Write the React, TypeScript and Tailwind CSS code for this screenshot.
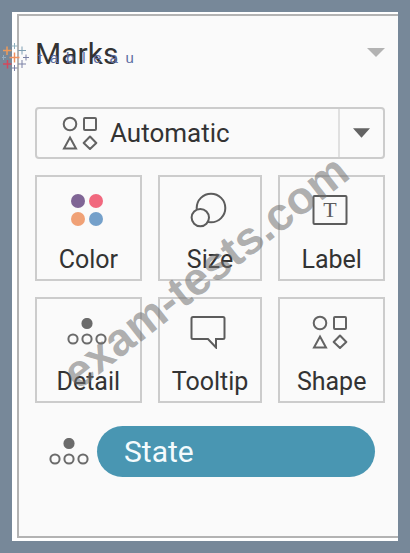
import type { ReactNode } from "react";

type Mark = {
  name: string;
  icon: ReactNode;
};

function ShapeIcon() {
  return (
    <svg
      aria-hidden
      className="h-[34px] w-[36px] shrink-0"
      fill="none"
      stroke="#636363"
      strokeWidth="2"
      viewBox="0 0 36 34"
    >
      <circle cx="8" cy="8" r="6.3" />
      <rect height="12" rx="1" width="12" x="22" y="2" />
      <path d="M8 21.5 L14 32.5 H2 Z" />
      <path d="M28 20.5 L34.3 27 L28 33 L21.7 27 Z" strokeLinejoin="round" />
    </svg>
  );
}

function ColorIcon() {
  return (
    <svg aria-hidden className="h-[34px] w-[34px]" viewBox="0 0 34 34">
      <circle cx="8" cy="8" fill="#7f6595" r="7" />
      <circle cx="26" cy="8" fill="#f1687e" r="7" />
      <circle cx="8" cy="26" fill="#f0a176" r="7" />
      <circle cx="26" cy="26" fill="#74a0ca" r="7" />
    </svg>
  );
}

function SizeIcon() {
  return (
    <svg
      aria-hidden
      className="h-[36px] w-[38px]"
      fill="#fafafa"
      stroke="#5c5c5c"
      strokeWidth="2"
      viewBox="0 0 38 36"
    >
      <circle cx="22" cy="16" r="14.3" />
      <circle cx="11.3" cy="25.6" r="8.7" />
    </svg>
  );
}

function LabelIcon() {
  return (
    <svg aria-hidden className="h-[34px] w-[36px]" viewBox="0 0 36 34">
      <rect
        fill="none"
        height="28"
        rx="1"
        stroke="#5c5c5c"
        strokeWidth="2"
        width="33"
        x="1.5"
        y="3"
      />
      <text
        className="font-['Liberation_Serif',serif] text-[22px]"
        fill="#5c5c5c"
        textAnchor="middle"
        x="18"
        y="24"
      >
        T
      </text>
    </svg>
  );
}

function DetailIcon() {
  return (
    <svg
      aria-hidden
      className="h-[28px] w-[40px] shrink-0"
      fill="none"
      stroke="#6b6b6b"
      strokeWidth="2"
      viewBox="0 0 40 28"
    >
      <circle cx="20" cy="5.5" fill="#6b6b6b" r="4.6" />
      <circle cx="6" cy="21" r="4.6" />
      <circle cx="20" cy="21" r="4.6" />
      <circle cx="34" cy="21" r="4.6" />
    </svg>
  );
}

function TooltipIcon() {
  return (
    <svg
      aria-hidden
      className="h-[34px] w-[36px]"
      fill="none"
      stroke="#5c5c5c"
      strokeWidth="2"
      viewBox="0 0 36 34"
    >
      <path d="M3 2 H33 Q34.5 2 34.5 3.5 V22.5 Q34.5 24 33 24 H26 V32.5 L18 24 H3 Q1.5 24 1.5 22.5 V3.5 Q1.5 2 3 2 Z" />
    </svg>
  );
}

const marks: Mark[] = [
  { name: "Color", icon: <ColorIcon /> },
  { name: "Size", icon: <SizeIcon /> },
  { name: "Label", icon: <LabelIcon /> },
  { name: "Detail", icon: <DetailIcon /> },
  { name: "Tooltip", icon: <TooltipIcon /> },
  { name: "Shape", icon: <ShapeIcon /> },
];

function Logo() {
  return (
    <div className="pointer-events-none absolute left-0.5 top-[42px] flex items-center gap-2">
      <svg
        aria-hidden
        className="h-[30px] w-[28px]"
        fill="none"
        viewBox="0 0 28 30"
      >
        <path d="M12.5 10.5 V20.5 M7.5 15.5 H17.5" stroke="#f0915f" strokeWidth="1.5" />
        <path d="M5 4.5 V13 M1 8.5 H9.5" stroke="#ee9a5b" strokeWidth="1.5" />
        <path d="M5.5 18 V26.5 M1 22 H9.5" stroke="#d4485c" strokeWidth="1.5" />
        <path d="M20 4.5 V12.5 M16 8.5 H24" stroke="#7f9fb3" />
        <path d="M20 18 V26 M16 22 H24" stroke="#7a80a5" />
        <path d="M12.5 1 V7 M9.5 4 H15.5" stroke="#8fb0bd" />
        <path d="M12.5 23 V29 M9.5 26 H15.5" stroke="#7a80a5" />
        <path d="M24 12.5 V18.5 M21 15.5 H27" stroke="#7a80a5" />
        <path d="M1.5 13 V18 M0 15.5 H4" stroke="#95adc0" />
      </svg>
      <div className="flex w-24 items-center justify-between pt-0.5 font-['Liberation_Sans',sans-serif] text-[15px] leading-4 text-[#5c6da3]">
        {[..."tableau"].map((letter, index) => (
          <span key={index}>{letter}</span>
        ))}
      </div>
    </div>
  );
}

export default function App() {
  return (
    <main className="relative flex min-h-screen overflow-hidden bg-[#778899] p-3 font-['Roboto',sans-serif] text-[#333333]">
      <div className="flex flex-1 bg-white pb-[3px] pl-[5px] pt-0.5">
        <section className="flex-1 border-y-2 border-l-2 border-[#b3b3b3] bg-[#fafafa] pl-4 pr-[13px] pt-5">
          <header className="flex items-center justify-between">
            <h1 className="text-[30px] leading-9">Marks</h1>
            <button aria-label="Marks menu" type="button">
              <svg aria-hidden className="mb-1 h-[9px] w-[18px]" viewBox="0 0 18 9">
                <path d="M0 0 H18 L9 9 Z" fill="#b3b3b3" />
              </svg>
            </button>
          </header>

          <div className="mt-[35px] flex h-[52px] items-center rounded-sm border-2 border-[#cccccc] pl-[25px]">
            <ShapeIcon />
            <select
              aria-label="Mark type"
              className="h-full min-w-0 flex-1 appearance-none bg-transparent pl-3 text-[26px]"
            >
              <option>Automatic</option>
            </select>
            <div className="pointer-events-none flex h-full w-[45px] items-center justify-center border-l-2 border-[#e0e0e0]">
              <svg aria-hidden className="h-[10px] w-[17px]" viewBox="0 0 18 10">
                <path d="M0 0 H18 L9 10 Z" fill="#636363" />
              </svg>
            </div>
          </div>

          <div className="mt-4 grid grid-cols-[107fr_105fr_107fr] gap-4">
            {marks.map((mark) => (
              <button
                className="flex h-[106px] flex-col items-center border-2 border-[#cccccc] pt-[15px]"
                key={mark.name}
                type="button"
              >
                <span className="flex h-9 items-center pr-[3px]">{mark.icon}</span>
                <span className="mt-4 text-[25px] leading-8">{mark.name}</span>
              </button>
            ))}
          </div>

          <div className="mt-[23px] flex items-center gap-2 pl-3.5 pr-2.5">
            <DetailIcon />
            <button
              className="h-[51px] flex-1 rounded-full bg-[#4996b2] pl-[27px] text-left text-[30px] text-[#f4fbfd]"
              type="button"
            >
              State
            </button>
          </div>
        </section>
      </div>

      <Logo />
      <div className="pointer-events-none absolute left-[81px] top-[353px] origin-bottom-left -rotate-[38deg] whitespace-nowrap font-['Liberation_Sans',sans-serif] text-[46px] font-bold leading-[42px] text-[#6e6e6e]/55">
        exam-tests.com
      </div>
    </main>
  );
}
